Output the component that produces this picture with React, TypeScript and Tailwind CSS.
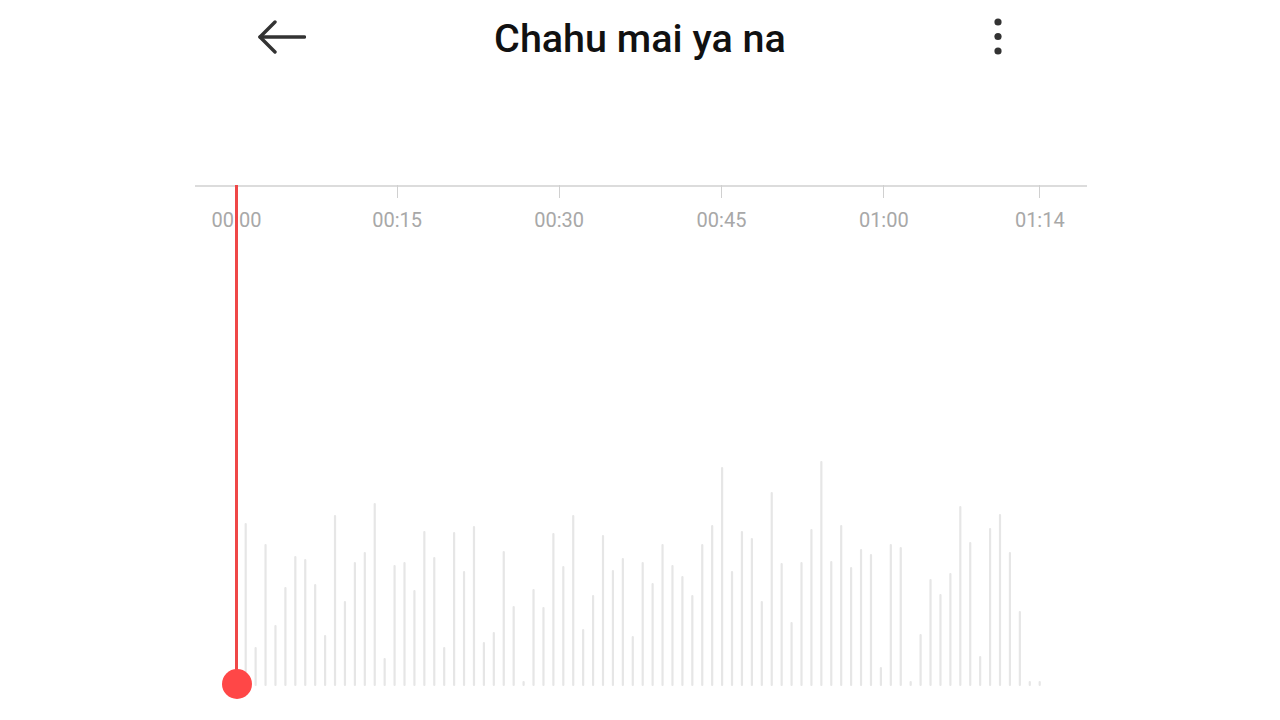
import React from 'react';

// tops of the waveform bars, page y coordinates (bottom sits at 685)
const barTops = [
  524, 648, 545, 626, 588, 557, 560, 585, 636, 516,
  602, 563, 553, 504, 659, 566, 563, 591, 532, 558,
  648, 533, 572, 527, 643, 633, 552, 607, 682, 590,
  608, 534, 567, 516, 630, 596, 536, 571, 559, 637,
  563, 584, 545, 566, 577, 596, 545, 526, 468, 572,
  532, 539, 602, 493, 564, 623, 563, 530, 462, 562,
  526, 568, 550, 555, 668, 545, 548, 682, 635, 580,
  595, 574, 507, 543, 657, 529, 515, 553, 612, 682,
  682,
];

const ticks = [
  { label: '00:00', x: 41 },
  { label: '00:15', x: 201.7 },
  { label: '00:30', x: 363.7 },
  { label: '00:45', x: 526 },
  { label: '01:00', x: 688.3 },
  { label: '01:14', x: 844.3 },
];

function BackArrow() {
  return (
    <svg width="48" height="34" viewBox="0 0 48 34" fill="none" stroke="#333333" strokeWidth={3.4} strokeLinecap="round" strokeLinejoin="round">
      <path d="M46.5 17H2" />
      <path d="M17 2L2 17l15 15" />
    </svg>
  );
}

function MoreDots() {
  return (
    <svg width="10" height="40" viewBox="0 0 10 40" fill="#333333">
      <circle cx="5" cy="5" r="3.6" />
      <circle cx="5" cy="19.5" r="3.6" />
      <circle cx="5" cy="34" r="3.6" />
    </svg>
  );
}

function Waveform() {
  // svg origin is page (195, 245)
  return (
    <svg width="892" height="455" viewBox="0 0 892 455">
      {barTops.map((top, i) => {
        const x = 245.7 + i * 9.925 - 195;
        const y1 = top - 245;
        const y2 = 685 - 245;
        return (
          <line key={i} x1={x} x2={x} y1={y1} y2={y2} stroke="#e6e6e6" strokeWidth={2.2} strokeLinecap="round" />
        );
      })}
    </svg>
  );
}

export default function App() {
  return (
    <div className="w-[1280px] h-[720px] bg-white overflow-hidden font-['Roboto',sans-serif]">
      {/* Header */}
      <header className="grid grid-cols-[1fr_auto_1fr] items-center h-[74px]">
        <div className="pl-[258px] flex items-center">
          <BackArrow />
        </div>
        <h1 className="mt-[4px] text-[39.5px] leading-none font-medium text-[#111111]">Chahu mai ya na</h1>
        <div className="pr-[277px] flex justify-end items-center">
          <MoreDots />
        </div>
      </header>

      {/* Timeline + waveform */}
      <div className="relative ml-[195px] mt-[111px] w-[892px]">
        <div className="relative h-[60px]">
          <div className="h-[1.5px] bg-[#dcdcdc]" />
          {ticks.map((t) => (
            <div key={t.label}>
              <div className="absolute top-0 w-px h-[13px] bg-[#d0d0d0]" style={{ left: t.x }} />
              <span
                className="absolute top-[25px] -translate-x-1/2 text-[20px] leading-[20px] text-[#a8a8a8]"
                style={{ left: t.x + 0.5 }}
              >
                {t.label}
              </span>
            </div>
          ))}
        </div>
        <Waveform />

        {/* playhead */}
        <div className="absolute top-0 left-[40px] w-[3px] h-[499px] bg-[#ef4747]" />
        <div className="absolute top-[484px] left-[26.5px] w-[30px] h-[30px] rounded-full bg-[#ff4747]" />
      </div>
    </div>
  );
}
